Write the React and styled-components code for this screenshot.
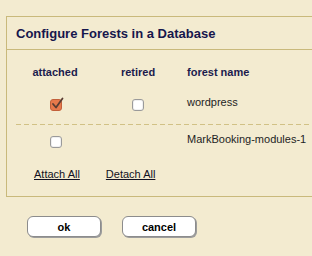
import React from "react";
import styled, { createGlobalStyle } from "styled-components";

const GlobalStyle = createGlobalStyle`
  html, body {
    margin: 0;
    background: #f3ebd0;
    overflow: hidden;
  }
  body {
    font-family: "Liberation Sans", Arial, sans-serif;
    width: 312px;
    height: 256px;
  }
`;

const Page = styled.div`
  padding-top: 16px;
  padding-left: 6px;
`;

const Panel = styled.div`
  border: 1px solid #c9b97b;
  border-right: none;
`;

const PanelHeader = styled.div`
  height: 32px;
  line-height: 33px;
  padding-left: 9px;
  border-bottom: 1px solid #c9b97b;
  font-size: 13px;
  font-weight: bold;
  color: #16164c;
`;

const PanelBody = styled.div`
  padding: 16px 0 15px 9px;
`;

const Row = styled.div`
  display: grid;
  grid-template-columns: 78px 88px 1fr;
  align-items: start;
  font-size: 11px;
  line-height: 13px;
  color: #1b1b4d;
  padding-top: ${(p) => p.$top || 0}px;
  padding-bottom: ${(p) => p.$bottom || 0}px;
`;

const HeadCell = styled.div`
  font-weight: bold;
  text-align: ${(p) => (p.$left ? "left" : "center")};
  padding-left: ${(p) => (p.$left ? "5px" : "0")};
`;

const BoxCell = styled.div`
  display: flex;
  justify-content: center;
  padding-left: ${(p) => p.$shift || 0}px;
`;

const NameCell = styled.div`
  padding-left: 5px;
  white-space: nowrap;
  color: #1e1e24;
`;

const Divider = styled.div`
  height: 1px;
  background-image: repeating-linear-gradient(
    to right,
    #d1c185 0 5px,
    transparent 5px 8px
  );
`;

const Box = styled.span`
  position: relative;
  display: block;
  width: 10px;
  height: 10px;
  margin: 3px;
  border: 1px solid ${(p) => (p.$checked ? "#c2603a" : "#9a9a9a")};
  border-radius: 3px;
  background: ${(p) => (p.$checked ? "#e8794b" : "#ffffff")};
  box-shadow: ${(p) => (p.$checked ? "none" : "inset 0 0 0 1px #f0f0f0")};
`;

const Check = styled.svg`
  position: absolute;
  left: 0;
  top: -3px;
`;

const Links = styled.div`
  display: flex;
  gap: 26px;
  padding-left: 18px;
  padding-top: 17px;
  font-size: 11px;
  line-height: 13px;
`;

const Link = styled.a`
  color: #111122;
  text-decoration: underline;
  cursor: pointer;
`;

const Buttons = styled.div`
  display: flex;
  gap: 21px;
  padding: 19px 0 0 21px;
`;

const Button = styled.button`
  width: 74px;
  height: 21px;
  padding: 0;
  background: #ffffff;
  border: 1px solid #8c8c8c;
  border-radius: 6px;
  box-shadow: 1px 1px 0 #9c9c9c;
  font-family: "Liberation Sans", Arial, sans-serif;
  font-size: 11px;
  font-weight: bold;
  color: #000;
`;

function CheckBox({ checked }) {
  return (
    <Box $checked={checked}>
      {checked && (
        <Check width="13" height="13" viewBox="0 0 13 13">
          <path
            d="M2 7 L5 10.5 L11.5 1.5"
            fill="none"
            stroke="#5a3d33"
            strokeWidth="1.8"
            strokeLinecap="round"
            strokeLinejoin="round"
          />
        </Check>
      )}
    </Box>
  );
}

const forests = [
  { name: "wordpress", attached: true, retired: false, retiredBox: true },
  { name: "MarkBooking-modules-1", attached: false, retired: false, retiredBox: false },
];

export default function App() {
  return (
    <>
      <GlobalStyle />
      <Page>
        <Panel>
          <PanelHeader>Configure Forests in a Database</PanelHeader>
          <PanelBody>
            <Row $bottom={17}>
              <HeadCell>attached</HeadCell>
              <HeadCell>retired</HeadCell>
              <HeadCell $left>forest name</HeadCell>
            </Row>
            <Row $bottom={10}>
              <BoxCell $shift={1}>
                <CheckBox checked={forests[0].attached} />
              </BoxCell>
              <BoxCell>
                <CheckBox checked={forests[0].retired} />
              </BoxCell>
              <NameCell>{forests[0].name}</NameCell>
            </Row>
            <Divider />
            <Row $top={8}>
              <BoxCell $shift={1}>
                <CheckBox checked={forests[1].attached} />
              </BoxCell>
              <div />
              <NameCell>{forests[1].name}</NameCell>
            </Row>
            <Links>
              <Link>Attach All</Link>
              <Link>Detach All</Link>
            </Links>
          </PanelBody>
        </Panel>
        <Buttons>
          <Button>ok</Button>
          <Button>cancel</Button>
        </Buttons>
      </Page>
    </>
  );
}
